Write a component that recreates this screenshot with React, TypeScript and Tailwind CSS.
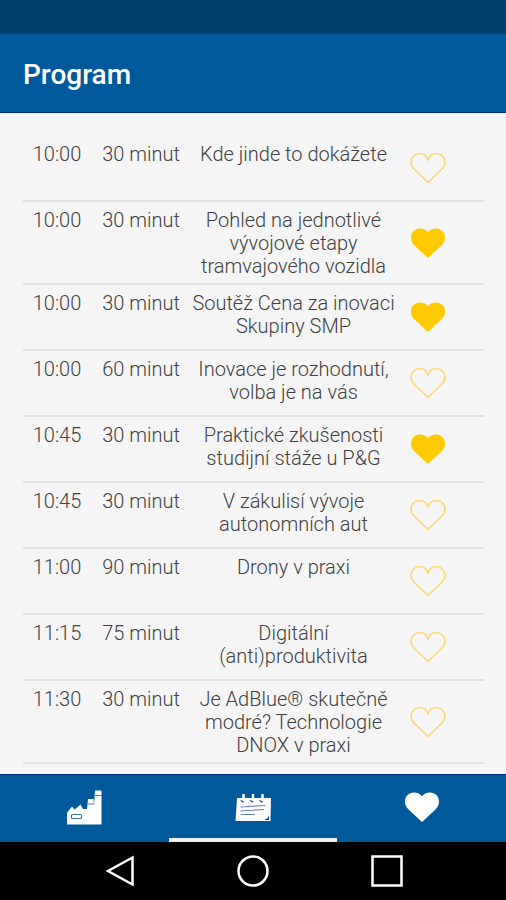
import { useState } from 'react';

const talks = [
  { time: '10:00', length: '30 minut', title: 'Kde jinde to dokážete', liked: false },
  { time: '10:00', length: '30 minut', title: 'Pohled na jednotlivé vývojové etapy tramvajového vozidla', liked: true },
  { time: '10:00', length: '30 minut', title: 'Soutěž Cena za inovaci Skupiny SMP', liked: true },
  { time: '10:00', length: '60 minut', title: 'Inovace je rozhodnutí, volba je na vás', liked: false },
  { time: '10:45', length: '30 minut', title: 'Praktické zkušenosti studijní stáže u P&G', liked: true },
  { time: '10:45', length: '30 minut', title: 'V zákulisí vývoje autonomních aut', liked: false },
  { time: '11:00', length: '90 minut', title: 'Drony v praxi', liked: false },
  { time: '11:15', length: '75 minut', title: 'Digitální (anti)produktivita', liked: false },
  { time: '11:30', length: '30 minut', title: 'Je AdBlue® skutečně modré? Technologie DNOX v praxi', liked: false },
];

function Heart({ filled, className }: { filled: boolean; className: string }) {
  return (
    <svg viewBox="0 0 36 32" className={className} aria-hidden="true">
      {filled ? (
        <path d="M18 31 L4.5 18.500 C2 16 1 13.500 1 10.500 C1 5 5 1.500 10 1.500 C13.500 1.500 16.500 3 18 5.500 C19.500 3 22.500 1.500 26 1.500 C31 1.500 35 5 35 10.500 C35 13.500 34 16 31.500 18.500 Z" />
      ) : (
        <path d="M18 30.500 L4.500 17.500 C2 15 1 13 1 10.500 C1 5 5 1.500 9.500 1.500 C13.500 1.500 17 4 18 8.500 C19 4 22.500 1.500 26.500 1.500 C31 1.500 35 5 35 10.500 C35 13 34 15 31.500 17.500 Z" />
      )}
    </svg>
  );
}

function FactoryIcon() {
  return (
    <svg viewBox="0 0 36 36" className="h-9 w-9" aria-hidden="true">
      <path fill="#fff" d="M1 35.500 V24 L6 17.500 L8.500 20.500 L10.500 19 L14.500 15.500 L17 20 L21 20 L22 10 H27.500 L28 16 L29 1.500 H35.500 V35.500 Z" />
      <path fill="none" stroke="#4d80b0" d="M22 15 H28 M29 6.500 H35.500" />
      <rect x="5.500" y="25.500" width="10" height="4" rx="1" fill="none" stroke="#3a70a6" strokeWidth="1.2" />
    </svg>
  );
}

function CalendarIcon() {
  return (
    <svg viewBox="0 0 36 34" className="h-[34px] w-9" aria-hidden="true">
      <path fill="#fff" d="M2 8 H36 L35.500 31 H.5 Z" />
      <path stroke="#fff" strokeWidth="2.5" strokeLinecap="round" d="M8.500 5 V10 M18 5 V10 M27.500 5 V10" />
      <path fill="none" stroke="#2f62a0" strokeWidth="1.3" d="M6 10 Q7 12.500 9 11.500 M15.500 10 Q16.500 12.500 18.500 11.500 M25 10 Q26 12.500 28 11.500" />
      <path stroke="#6b86ad" strokeWidth="1.2" d="M5.500 17 L30 15.500 M5.500 21 L29 19.500 M5.500 24.500 H20" />
      <path fill="#123a80" d="M34 25 V30 H29 L33 28 Z" />
    </svg>
  );
}

const tabs = [
  { id: 'expo', label: 'Vystavovatelé', icon: <FactoryIcon /> },
  { id: 'program', label: 'Program', icon: <CalendarIcon /> },
  { id: 'liked', label: 'Oblíbené', icon: <Heart filled className="h-8 w-9 fill-white" /> },
];

export default function App() {
  const [liked, setLiked] = useState(talks.map((talk) => talk.liked));
  const [active, setActive] = useState('program');

  const toggle = (index: number) => {
    setLiked(liked.map((value, i) => (i === index ? !value : value)));
  };

  return (
    <div className="flex min-h-screen flex-col bg-[#f5f5f5] font-[Roboto,sans-serif] text-[#404040]">
      <div className="h-[34px] bg-[#00406b]" />
      <header className="flex h-[79px] items-center border-b border-[#002a80] bg-[#00599a] px-[23px] pt-1">
        <h1 className="text-[28px] font-medium text-white">Program</h1>
      </header>

      <main className="grow pt-[23px] pr-[22px] pl-[23px]">
        <table className="w-full table-fixed border-separate border-spacing-0 text-center text-[20px] leading-[23px] font-light">
          <colgroup>
            <col className="w-[68px]" />
            <col className="w-[100px]" />
            <col />
            <col className="w-[88px]" />
          </colgroup>
          <tbody>
            {talks.map((talk, index) => (
              <tr key={talk.title} className="h-[66px] align-top">
                <td className="border-b-2 border-[#e2e2e2] pt-[7px] pb-[5px]">{talk.time}</td>
                <td className="border-b-2 border-[#e2e2e2] pt-[7px] pb-[5px]">{talk.length}</td>
                <td className="border-b-2 border-[#e2e2e2] pt-[7px] pb-[5px]">{talk.title}</td>
                <td className="border-b-2 border-[#e2e2e2] pl-3.5 text-left align-middle">
                  <button
                    type="button"
                    aria-label={talk.title}
                    aria-pressed={liked[index]}
                    onClick={() => toggle(index)}
                    className="block"
                  >
                    <Heart
                      filled={liked[index]}
                      className={
                        liked[index]
                          ? 'h-8 w-9 fill-[#ffc900]'
                          : 'h-8 w-9 fill-none stroke-[#ffd573] stroke-[1.5]'
                      }
                    />
                  </button>
                </td>
              </tr>
            ))}
          </tbody>
        </table>
      </main>

      <nav className="grid h-[68px] grid-cols-3 border-t border-[#002a80] bg-[#00599a]">
        {tabs.map((tab) => (
          <button
            key={tab.id}
            type="button"
            aria-label={tab.label}
            onClick={() => setActive(tab.id)}
            className={
              active === tab.id
                ? 'flex items-center justify-center border-b-4 border-[#f0f0f0]'
                : 'flex items-center justify-center border-b-4 border-transparent'
            }
          >
            {tab.icon}
          </button>
        ))}
      </nav>

      <div className="flex h-[58px] items-center justify-center gap-[102px] bg-black">
        <button type="button" aria-label="Zpět">
          <svg viewBox="0 0 32 32" className="h-8 w-8 fill-none stroke-white stroke-[2.5]">
            <path d="M29.500 2.500 V29.500 L5 16 Z" />
          </svg>
        </button>
        <button type="button" aria-label="Domů">
          <svg viewBox="0 0 32 32" className="h-8 w-8 fill-none stroke-white stroke-[2.5]">
            <circle cx="16" cy="16" r="14.500" />
          </svg>
        </button>
        <button type="button" aria-label="Přehled">
          <svg viewBox="0 0 32 32" className="h-8 w-8 fill-none stroke-white stroke-[2.5]">
            <rect x="1.500" y="1.500" width="29" height="29" />
          </svg>
        </button>
      </div>
    </div>
  );
}
